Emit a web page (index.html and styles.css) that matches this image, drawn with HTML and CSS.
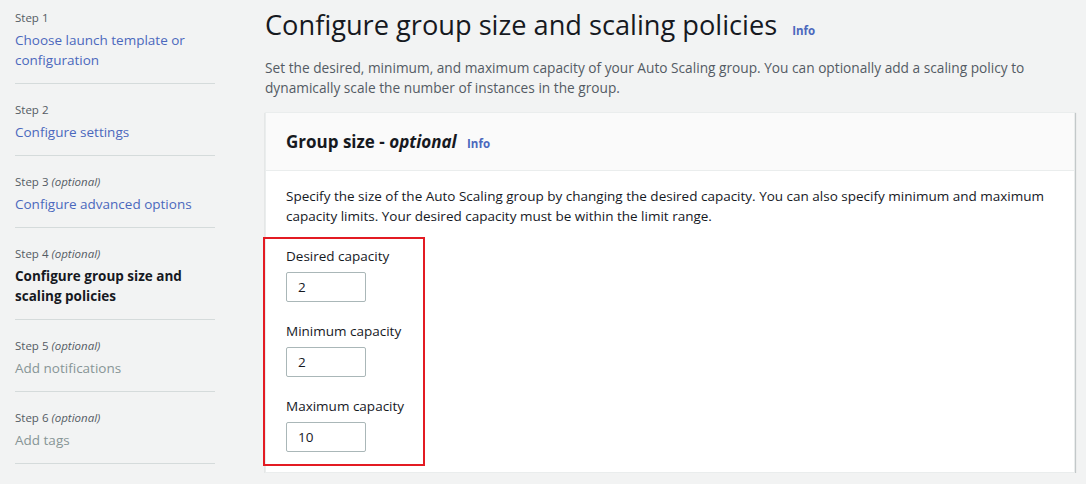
FILE: index.html
```html
<!DOCTYPE html>
<html lang="en">
<head>
    <meta charset="UTF-8">
    <meta name="viewport" content="width=device-width, initial-scale=1.0">
    <title>Configure group size and scaling policies</title>
    <link rel="stylesheet" href="styles.css">
</head>
<body>
    <div class="page">
        <nav class="steps">
            <div class="step">
                <div class="step-label">Step 1</div>
                <a class="step-title link" href="#">Choose launch template or configuration</a>
            </div>
            <div class="step">
                <div class="step-label">Step 2</div>
                <a class="step-title link" href="#">Configure settings</a>
            </div>
            <div class="step">
                <div class="step-label">Step 3 <i>(optional)</i></div>
                <a class="step-title link" href="#">Configure advanced options</a>
            </div>
            <div class="step">
                <div class="step-label">Step 4 <i>(optional)</i></div>
                <div class="step-title current">Configure group size and scaling policies</div>
            </div>
            <div class="step">
                <div class="step-label">Step 5 <i>(optional)</i></div>
                <div class="step-title disabled">Add notifications</div>
            </div>
            <div class="step">
                <div class="step-label">Step 6 <i>(optional)</i></div>
                <div class="step-title disabled">Add tags</div>
            </div>
        </nav>

        <main class="content">
            <h1>Configure group size and scaling policies <a class="info" href="#">Info</a></h1>
            <p class="intro">Set the desired, minimum, and maximum capacity of your Auto Scaling group. You can optionally add a scaling policy to dynamically scale the number of instances in the group.</p>

            <div class="card">
                <div class="card-header">
                    <h2>Group size - <i>optional</i> <a class="info" href="#">Info</a></h2>
                </div>
                <div class="card-body">
                    <p>Specify the size of the Auto Scaling group by changing the desired capacity. You can also specify minimum and maximum capacity limits. Your desired capacity must be within the limit range.</p>
                    <div class="highlight">
                        <div class="field">
                            <label for="desired">Desired capacity</label>
                            <input id="desired" type="text" value="2">
                        </div>
                        <div class="field">
                            <label for="min">Minimum capacity</label>
                            <input id="min" type="text" value="2">
                        </div>
                        <div class="field">
                            <label for="max">Maximum capacity</label>
                            <input id="max" type="text" value="10">
                        </div>
                    </div>
                </div>
            </div>
        </main>
    </div>
</body>
</html>
```

FILE: styles.css
```css
body { margin: 0; background: #f2f3f3; font-family: "Open Sans", "Liberation Sans", sans-serif; font-size: 13.7px; color: #16191f; }
.page { display: flex; align-items: flex-start; }

.steps { width: 200px; padding-left: 15px; flex-shrink: 0; }
.step { padding: 18px 0 13px; border-bottom: 1px solid #d5dbdb; }
.step:first-child { padding-top: 10px; }
.step-label { font-size: 11.5px; line-height: 16px; color: #545b64; margin-bottom: 4px; }
.step-title { display: block; font-size: 13.5px; line-height: 20px; }
.link { color: #4b68bd; text-decoration: none; }
.current { font-weight: bold; color: #16191f; }
.disabled { color: #879596; }

.content { flex: 1; margin-left: 50px; margin-right: 11px; }
h1 { font-size: 27.2px; font-weight: 400; line-height: 36px; margin: 7px 0 15px; }
h1 .info { margin-left: 8px; }
.info { font-size: 11.5px; line-height: 1; font-weight: bold; color: #4b68bd; text-decoration: none; margin-left: 6px; font-style: normal; }
.intro { margin: 0 0 14px; line-height: 20px; color: #545b64; }

.card { background: #fff; border: 1px solid #eaeded; box-shadow: 0 1px 1px 0 rgba(0,28,36,0.3), 1px 1px 1px 0 rgba(0,28,36,0.15); }
.card-header { background: #fafafa; border-bottom: 1px solid #eaeded; padding: 17px 20px 16px; }
.card-header h2 { margin: 0; font-size: 17px; line-height: 24px; font-weight: bold; }
.card-header h2 i { font-weight: bold; }
.card-body { padding: 15px 20px 6px; }
.card-body p { margin: 0; font-size: 13.5px; line-height: 20px; }

.highlight { width: 137px; margin: 11px 0 0 -23px; padding: 7px 0 12px 21px; border: 2px solid #e31b23; }
.field { margin-bottom: 19px; }
.field:last-child { margin-bottom: 0; }
.field label { display: block; font-size: 13.5px; line-height: 20px; margin-bottom: 6px; }
.field input { box-sizing: border-box; width: 80px; height: 30px; border: 1px solid #aab7b8; border-radius: 2px; padding: 0 11px; font: inherit; font-size: 13.5px; color: #16191f; background: #fff; }
```
